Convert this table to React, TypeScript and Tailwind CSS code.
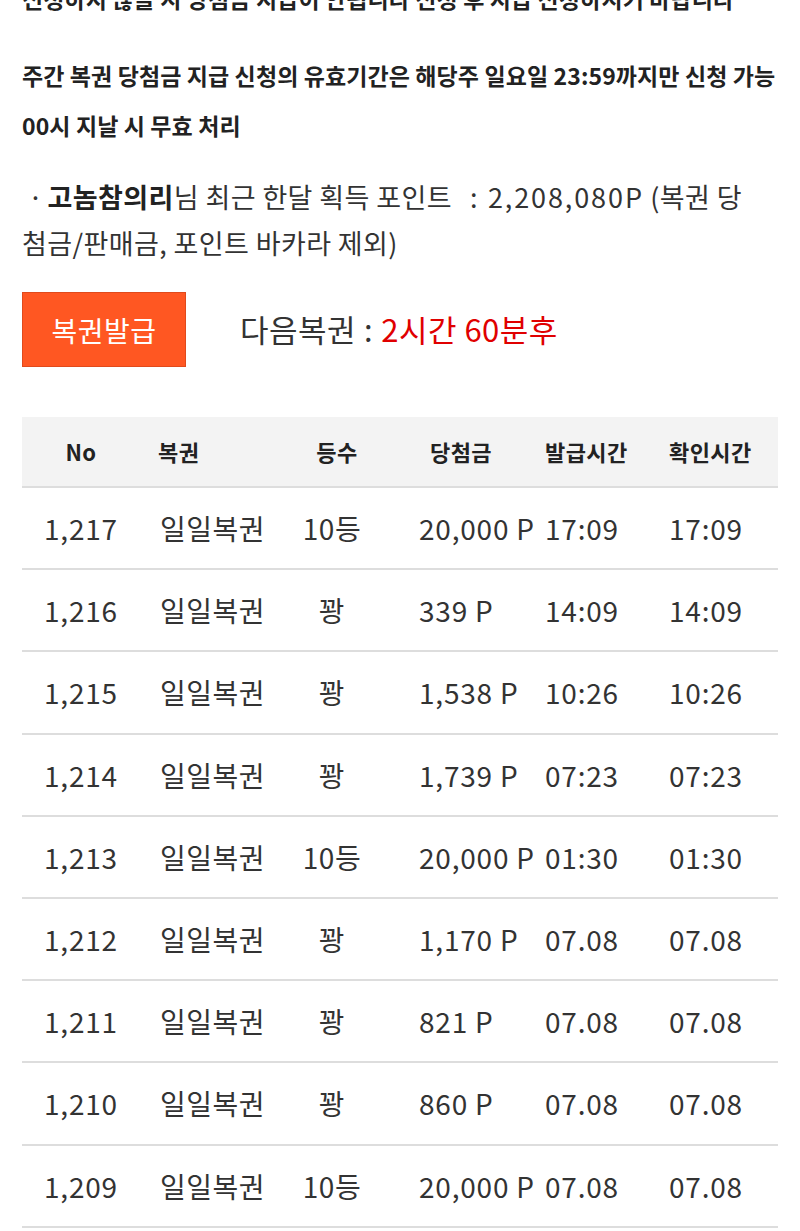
import React from "react";

const rows: [string, string, string, string, string][] = [
  ["1,217", "10등", "20,000 P", "17:09", "17:09"],
  ["1,216", "꽝", "339 P", "14:09", "14:09"],
  ["1,215", "꽝", "1,538 P", "10:26", "10:26"],
  ["1,214", "꽝", "1,739 P", "07:23", "07:23"],
  ["1,213", "10등", "20,000 P", "01:30", "01:30"],
  ["1,212", "꽝", "1,170 P", "07.08", "07.08"],
  ["1,211", "꽝", "821 P", "07.08", "07.08"],
  ["1,210", "꽝", "860 P", "07.08", "07.08"],
  ["1,209", "10등", "20,000 P", "07.08", "07.08"],
];

export default function App() {
  return (
    <div
      className="w-[800px] h-[1231px] overflow-hidden bg-white text-[#333]"
      style={{ fontFamily: '"Noto Sans CJK KR", "Noto Sans", sans-serif' }}
    >
      <div className="px-[22px]">
        <p className="-mt-[27px] text-[23px] leading-[50px] font-bold text-[#222] whitespace-nowrap tracking-[0.1px]">
          신청하지 않을 시 당첨금 지급이 안됩니다 신청 후 지급 신청하시기 바랍니다
        </p>
        <div className="mt-[27px] text-[23px] leading-[50px] font-bold text-[#222] tracking-[0.1px]">
          <p className="whitespace-nowrap">주간 복권 당첨금 지급 신청의 유효기간은 해당주 일요일 23:59까지만 신청 가능</p>
          <p>00시 지날 시 무효 처리</p>
        </div>
        <p className="mt-[24px] text-[27px] leading-[46px] text-[#333] tracking-[0.4px] whitespace-nowrap">
          <span className="ml-[6px] mr-[4px]">·</span>
          <b className="font-bold text-[#222]">고놈참의리</b>님 최근 한달 획득 포인트
          <span className="ml-[18px] mr-[10px]">:</span>
          <span className="tracking-[1.9px]">2,208,080P</span> (복권 당
          <br />
          첨금/판매금, 포인트 바카라 제외)
        </p>
        <div className="mt-[26px] flex items-center">
          <button className="w-[164px] h-[75px] bg-[#ff5722] border border-[#e04a1c] text-white text-[28px] tracking-[0.5px] flex items-center justify-center">
            복권발급
          </button>
          <div className="ml-[54px] text-[31px] text-[#333] tracking-[0.5px] whitespace-nowrap">
            다음복권<span className="ml-[8px] mr-[8px]">:</span>
            <span className="text-[#e00000]">2시간 60분후</span>
          </div>
        </div>
        <div className="mt-[50px] w-[756px]">
          <div className="grid grid-cols-[118px_150px_88px_162px_120px_118px] h-[71px] bg-[#f3f3f3] border-b-2 border-[#dddddd] items-center text-[22px] font-bold text-[#222] tracking-[0.4px] whitespace-nowrap">
            <div className="text-center">No</div>
            <div className="pl-[18px]">복권</div>
            <div className="text-center pl-[6px]">등수</div>
            <div className="pl-[52px]">당첨금</div>
            <div className="pl-[5px]">발급시간</div>
            <div className="pl-[9px]">확인시간</div>
          </div>
          {rows.map((r) => (
            <div
              key={r[0]}
              className="grid grid-cols-[118px_150px_88px_162px_120px_118px] h-[82.2px] border-b-2 border-[#dddddd] items-center text-[28px] text-[#333] whitespace-nowrap"
            >
              <div className="text-center tracking-[0.8px]">{r[0]}</div>
              <div className="pl-[20px] tracking-[0.5px]">일일복권</div>
              <div className="text-center -ml-[4px] tracking-[0.5px]">{r[1]}</div>
              <div className="pl-[41px] tracking-[0.8px]">{r[2]}</div>
              <div className="pl-[5px] tracking-[0.8px]">{r[3]}</div>
              <div className="pl-[9px] tracking-[0.8px]">{r[4]}</div>
            </div>
          ))}
        </div>
      </div>
    </div>
  );
}
